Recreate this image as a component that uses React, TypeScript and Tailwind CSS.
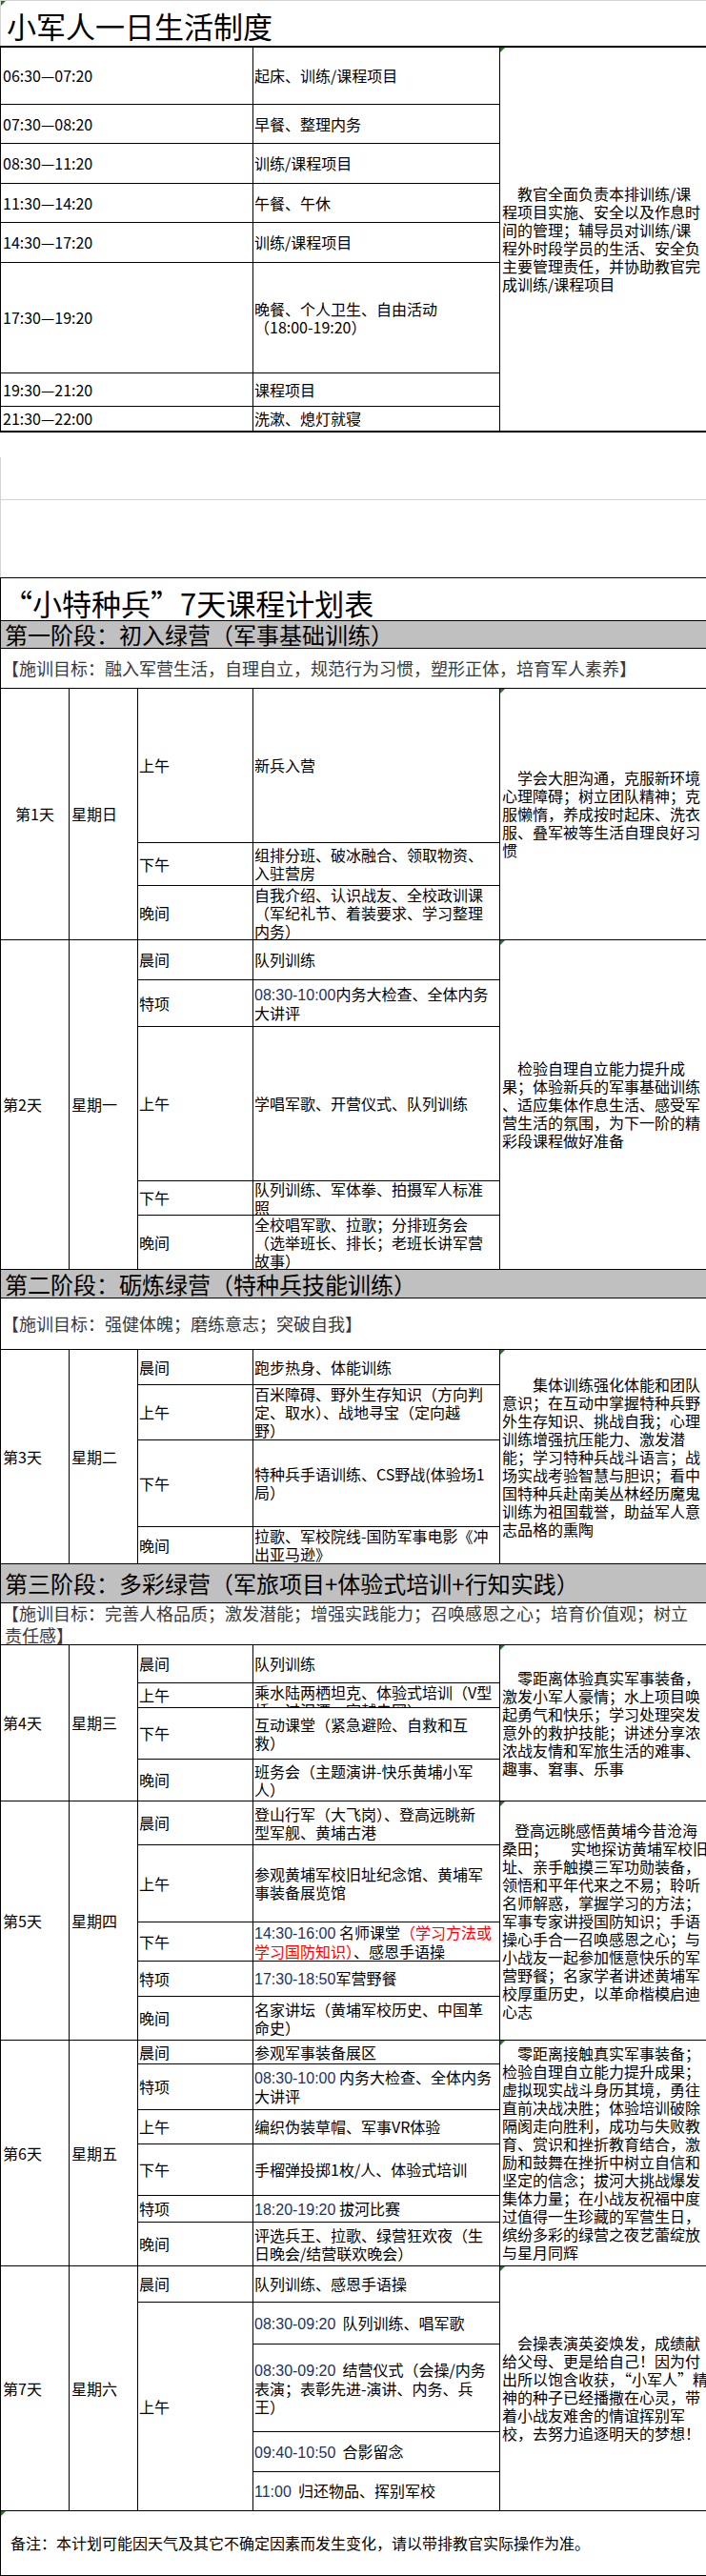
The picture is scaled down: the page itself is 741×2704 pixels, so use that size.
import React from "react";

type Seg = string | ["n" | "r", string];
type Line = string | Seg[];
type Cell = { h: number; lines: Line[]; top?: boolean };
type Slot = { label: string; rows: Cell[] };
type Day = {
  day: string;
  week: string;
  center?: boolean;
  slots: Slot[];
  desc: Line[];
  indent: string;
};

const SANS = "font-['Noto_Sans_CJK_SC','Noto_Sans_CJK_JP',sans-serif]";
const LATIN = "font-['Liberation_Sans','Noto_Sans_CJK_SC',sans-serif] text-[#1c3361]";

const DAILY: { time: string; text: Line[]; h: string }[] = [
  { time: "06:30—07:20", text: ["起床、训练/课程项目"], h: "h-[60px] border-b" },
  { time: "07:30—08:20", text: ["早餐、整理内务"], h: "h-[41px] border-b" },
  { time: "08:30—11:20", text: ["训练/课程项目"], h: "h-[42px] border-b" },
  { time: "11:30—14:20", text: ["午餐、午休"], h: "h-[41px] border-b" },
  { time: "14:30—17:20", text: ["训练/课程项目"], h: "h-[42px] border-b" },
  { time: "17:30—19:20", text: ["晚餐、个人卫生、自由活动", "（18:00-19:20）"], h: "h-[116px] border-b" },
  { time: "19:30—21:20", text: ["课程项目"], h: "h-[35px] border-b" },
  { time: "21:30—22:00", text: ["洗漱、熄灯就寝"], h: "h-[27px] border-b-2" },
];

const DAILY_DESC = [
  "教官全面负责本排训练/课",
  "程项目实施、安全以及作息时",
  "间的管理；辅导员对训练/课",
  "程外时段学员的生活、安全负",
  "主要管理责任，并协助教官完",
  "成训练/课程项目",
];

const PHASE1: Day[] = [
  {
    day: "第1天",
    week: "星期日",
    center: true,
    indent: "pl-[16px]",
    slots: [
      { label: "上午", rows: [{ h: 162, lines: ["新兵入营"] }] },
      { label: "下午", rows: [{ h: 45, lines: ["组排分班、破冰融合、领取物资、", "入驻营房"] }] },
      {
        label: "晚间",
        rows: [{ h: 57, lines: ["自我介绍、认识战友、全校政训课", "（军纪礼节、着装要求、学习整理", "内务）"] }],
      },
    ],
    desc: ["学会大胆沟通，克服新环境", "心理障碍；树立团队精神；克", "服懒惰，养成按时起床、洗衣", "服、叠军被等生活自理良好习", "惯"],
  },
  {
    day: "第2天",
    week: "星期一",
    indent: "pl-[16px]",
    slots: [
      { label: "晨间", rows: [{ h: 42, lines: ["队列训练"] }] },
      { label: "特项", rows: [{ h: 49, lines: [[["n", "08:30-10:00"], "内务大检查、全体内务"], "大讲评"] }] },
      { label: "上午", rows: [{ h: 162, lines: ["学唱军歌、开营仪式、队列训练"] }] },
      { label: "下午", rows: [{ h: 36, lines: ["队列训练、军体拳、拍摄军人标准", "照"] }] },
      {
        label: "晚间",
        rows: [{ h: 57, lines: ["全校唱军歌、拉歌；分排班务会", "（选举班长、排长；老班长讲军营", "故事）"] }],
      },
    ],
    desc: ["检验自理自立能力提升成", "果；体验新兵的军事基础训练", "、适应集体作息生活、感受军", "营生活的氛围，为下一阶的精", "彩段课程做好准备"],
  },
];

const PHASE2: Day[] = [
  {
    day: "第3天",
    week: "星期二",
    indent: "pl-[32px]",
    slots: [
      { label: "晨间", rows: [{ h: 37, lines: ["跑步热身、体能训练"] }] },
      {
        label: "上午",
        rows: [{ h: 58, lines: ["百米障碍、野外生存知识（方向判", "定、取水）、战地寻宝（定向越", "野）"] }],
      },
      { label: "下午", rows: [{ h: 91, lines: ["特种兵手语训练、CS野战(体验场1", "局）"] }] },
      { label: "晚间", rows: [{ h: 39, lines: ["拉歌、军校院线-国防军事电影《冲", "出亚马逊》"] }] },
    ],
    desc: [
      "集体训练强化体能和团队",
      "意识；在互动中掌握特种兵野",
      "外生存知识、挑战自我；心理",
      "训练增强抗压能力、激发潜",
      "能；学习特种兵战斗语言；战",
      "场实战考验智慧与胆识；看中",
      "国特种兵赴南美丛林经历魔鬼",
      "训练为祖国载誉，助益军人意",
      "志品格的熏陶",
    ],
  },
];

const PHASE3: Day[] = [
  {
    day: "第4天",
    week: "星期三",
    indent: "pl-[16px]",
    slots: [
      { label: "晨间", rows: [{ h: 40, lines: ["队列训练"] }] },
      { label: "上午", rows: [{ h: 26, top: true, lines: ["乘水陆两栖坦克、体验式培训（V型", "桥、过泥潭、穿越电网）"] }] },
      { label: "下午", rows: [{ h: 54, lines: ["互动课堂（紧急避险、自救和互", "救）"] }] },
      { label: "晚间", rows: [{ h: 44, lines: ["班务会（主题演讲-快乐黄埔小军", "人）"] }] },
    ],
    desc: [
      "零距离体验真实军事装备，",
      "激发小军人豪情；水上项目唤",
      "起勇气和快乐；学习处理突发",
      "意外的救护技能；讲述分享浓",
      "浓战友情和军旅生活的难事、",
      "趣事、窘事、乐事",
    ],
  },
  {
    day: "第5天",
    week: "星期四",
    indent: "pl-[13px]",
    slots: [
      { label: "晨间", rows: [{ h: 46, lines: ["登山行军（大飞岗）、登高远眺新", "型军舰、黄埔古港"] }] },
      { label: "上午", rows: [{ h: 81, lines: ["参观黄埔军校旧址纪念馆、黄埔军", "事装备展览馆"] }] },
      {
        label: "下午",
        rows: [
          {
            h: 41,
            lines: [
              [["n", "14:30-16:00"], " 名师课堂", ["r", "（学习方法或"]],
              [["r", "学习国防知识）"], "、感恩手语操"],
            ],
          },
        ],
      },
      { label: "特项", rows: [{ h: 37, lines: [[["n", "17:30-18:50"], "军营野餐"]] }] },
      { label: "晚间", rows: [{ h: 46, lines: ["名家讲坛（黄埔军校历史、中国革", "命史）"] }] },
    ],
    desc: [
      "登高远眺感悟黄埔今昔沧海",
      "桑田；\u2003\u2002实地探访黄埔军校旧",
      "址、亲手触摸三军功勋装备，",
      "领悟和平年代来之不易；聆听",
      "名师解惑，掌握学习的方法；",
      "军事专家讲授国防知识；手语",
      "操心手合一召唤感恩之心；与",
      "小战友一起参加惬意快乐的军",
      "营野餐；名家学者讲述黄埔军",
      "校厚重历史，以革命楷模启迪",
      "心志",
    ],
  },
  {
    day: "第6天",
    week: "星期五",
    indent: "pl-[16px]",
    slots: [
      { label: "晨间", rows: [{ h: 25, lines: ["参观军事装备展区"] }] },
      { label: "特项", rows: [{ h: 48, lines: [[["n", "08:30-10:00"], " 内务大检查、全体内务"], "大讲评"] }] },
      { label: "上午", rows: [{ h: 36, lines: ["编织伪装草帽、军事VR体验"] }] },
      { label: "下午", rows: [{ h: 54, lines: ["手榴弹投掷1枚/人、体验式培训"] }] },
      { label: "特项", rows: [{ h: 28, lines: [[["n", "18:20-19:20"], " 拔河比赛"]] }] },
      { label: "晚间", rows: [{ h: 46, lines: ["评选兵王、拉歌、绿营狂欢夜（生", "日晚会/结营联欢晚会）"] }] },
    ],
    desc: [
      "零距离接触真实军事装备；",
      "检验自理自立能力提升成果；",
      "虚拟现实战斗身历其境，勇往",
      "直前决战决胜；体验培训破除",
      "隔阂走向胜利，成功与失败教",
      "育、赏识和挫折教育结合，激",
      "励和鼓舞在挫折中树立自信和",
      "坚定的信念；拔河大挑战爆发",
      "集体力量；在小战友祝福中度",
      "过值得一生珍藏的军营生日，",
      "缤纷多彩的绿营之夜艺蕾绽放",
      "与星月同辉",
    ],
  },
  {
    day: "第7天",
    week: "星期六",
    indent: "pl-[16px]",
    slots: [
      { label: "晨间", rows: [{ h: 38, lines: ["队列训练、感恩手语操"] }] },
      {
        label: "上午",
        rows: [
          { h: 44, lines: [[["n", "08:30-09:20"], "  队列训练、唱军歌"]] },
          {
            h: 92,
            lines: [[["n", "08:30-09:20"], "  结营仪式（会操/内务"], "表演；表彰先进-演讲、内务、兵", "王）"],
          },
          { h: 42, lines: [[["n", "09:40-10:50"], "  合影留念"]] },
          { h: 41, lines: [[["n", "11:00"], "  归还物品、挥别军校"]] },
        ],
      },
    ],
    desc: [
      "会操表演英姿焕发，成绩献",
      "给父母、更是给自己！因为付",
      "出所以饱含收获，“小军人”精",
      "神的种子已经播撒在心灵，带",
      "着小战友难舍的情谊挥别军",
      "校，去努力追逐明天的梦想！",
    ],
  },
];

function Flag({ className = "" }: { className?: string }) {
  return (
    <span
      className={`pointer-events-none absolute top-0 h-0 w-0 border-t-[5px] border-r-[5px] border-t-[#1b7f1b] border-r-transparent ${className}`}
    />
  );
}

function TextLine({ line, className = "" }: { line: Line; className?: string }) {
  const segs = typeof line === "string" ? [line] : line;
  return (
    <div className={`whitespace-pre ${className}`}>
      {segs.map((s, i) =>
        typeof s === "string" ? (
          <span key={i}>{s}</span>
        ) : s[0] === "n" ? (
          <span key={i} className={LATIN}>
            {s[1]}
          </span>
        ) : (
          <span key={i} className="text-[#ff0000]">
            {s[1]}
          </span>
        )
      )}
    </div>
  );
}

function DayBlock({ d }: { d: Day }) {
  return (
    <div className="flex">
      <div
        className={`flex w-[72px] shrink-0 items-center border-r border-b border-black ${
          d.center ? "justify-center" : "pl-[2px]"
        }`}
      >
        {d.day}
      </div>
      <div className="flex w-[72px] shrink-0 items-center border-r border-b border-black pl-[2px]">{d.week}</div>
      <div className="flex w-[380px] shrink-0 flex-col">
        {d.slots.map((s, i) => (
          <div key={i} className="flex">
            <div className="flex w-[121px] shrink-0 items-center border-r border-b border-black pl-[1px]">
              {s.label}
            </div>
            <div className="flex w-[259px] shrink-0 flex-col">
              {s.rows.map((r, j) => (
                <div
                  key={j}
                  style={{ height: r.h }}
                  className={`flex overflow-hidden border-r border-b border-black pl-[1px] ${
                    r.top ? "items-start" : "items-center"
                  }`}
                >
                  <div>
                    {r.lines.map((l, k) => (
                      <TextLine key={k} line={l} />
                    ))}
                  </div>
                </div>
              ))}
            </div>
          </div>
        ))}
      </div>
      <div className="relative flex min-w-0 flex-1 items-center overflow-hidden border-b border-black pl-[2px]">
        <Flag className="left-0" />
        <div>
          {d.desc.map((l, k) => (
            <TextLine key={k} line={l} className={k === 0 ? d.indent : ""} />
          ))}
        </div>
      </div>
    </div>
  );
}

function PhaseBar({ text, h }: { text: string; h: string }) {
  return (
    <div className={`flex items-center border-b border-black bg-[#c0c0c0] pl-[4px] text-[24px] leading-none ${h}`}>
      {text}
    </div>
  );
}

function Goal({ lines, h }: { lines: string[]; h: string }) {
  return (
    <div className={`flex items-center border-b border-black pl-[1px] text-[18px] leading-[23px] text-[#3a3a3a] ${h}`}>
      <div>
        {lines.map((l, i) => (
          <div key={i} className={`whitespace-pre ${i > 0 ? "pl-[3px]" : ""}`}>
            {l}
          </div>
        ))}
      </div>
    </div>
  );
}

export default function App() {
  return (
    <div lang="zh-CN" className={`relative w-[741px] bg-white text-[16px] leading-[19px] text-black ${SANS}`}>
      {/* 一日生活制度 */}
      <div className="relative flex h-[48px] items-center border-t border-l border-[#d4d4d4] pl-[6px] pt-[4px] text-[31px] leading-none">
        <Flag className="left-0" />
        小军人一日生活制度
      </div>
      <div className="flex border-t-2 border-l border-black">
        <div className="flex w-[524px] shrink-0 flex-col">
          {DAILY.map((r, i) => (
            <div key={i} className={`flex border-black ${r.h}`}>
              <div className="flex w-[265px] shrink-0 items-center border-r border-black pl-[2px]">{r.time}</div>
              <div className="flex w-[259px] shrink-0 items-center overflow-hidden border-r border-black pl-[1px]">
                <div>
                  {r.text.map((l, k) => (
                    <TextLine key={k} line={l} />
                  ))}
                </div>
              </div>
            </div>
          ))}
        </div>
        <div className="relative flex min-w-0 flex-1 items-center overflow-hidden border-b-2 border-black pl-[2px]">
          <Flag className="left-0" />
          <div>
            {DAILY_DESC.map((l, k) => (
              <TextLine key={k} line={l} className={k === 0 ? "pl-[16px]" : ""} />
            ))}
          </div>
        </div>
      </div>

      {/* 空白行 */}
      <div className="h-[26px]" />
      <div className="h-[45px] border-l border-b border-[#d4d4d4]" />
      <div className="h-[81px] border-l border-[#d4d4d4]" />

      {/* 7天课程计划表 */}
      <div className="border-l border-black">
        <div className="flex h-[46px] items-center border-t border-b border-black pl-[2px] pt-[6px] text-[31px] leading-none">
          “小特种兵”7天课程计划表
        </div>

        <PhaseBar text="第一阶段：初入绿营（军事基础训练）" h="h-[29px]" />
        <Goal lines={["【施训目标：融入军营生活，自理自立，规范行为习惯，塑形正体，培育军人素养】"]} h="h-[42px]" />
        {PHASE1.map((d) => (
          <DayBlock key={d.day} d={d} />
        ))}

        <PhaseBar text="第二阶段：砺炼绿营（特种兵技能训练）" h="h-[30px]" />
        <Goal lines={["【施训目标：强健体魄；磨练意志；突破自我】"]} h="h-[54px]" />
        {PHASE2.map((d) => (
          <DayBlock key={d.day} d={d} />
        ))}

        <PhaseBar text="第三阶段：多彩绿营（军旅项目+体验式培训+行知实践）" h="h-[41px]" />
        <Goal
          lines={["【施训目标：完善人格品质；激发潜能；增强实践能力；召唤感恩之心；培育价值观；树立", "责任感】"]}
          h="h-[44px]"
        />
        {PHASE3.map((d) => (
          <DayBlock key={d.day} d={d} />
        ))}

        <div className="relative flex h-[68px] items-center border-b border-black pl-[10px]">
          <Flag className="left-0" />
          备注：本计划可能因天气及其它不确定因素而发生变化，请以带排教官实际操作为准。
        </div>
      </div>
    </div>
  );
}
